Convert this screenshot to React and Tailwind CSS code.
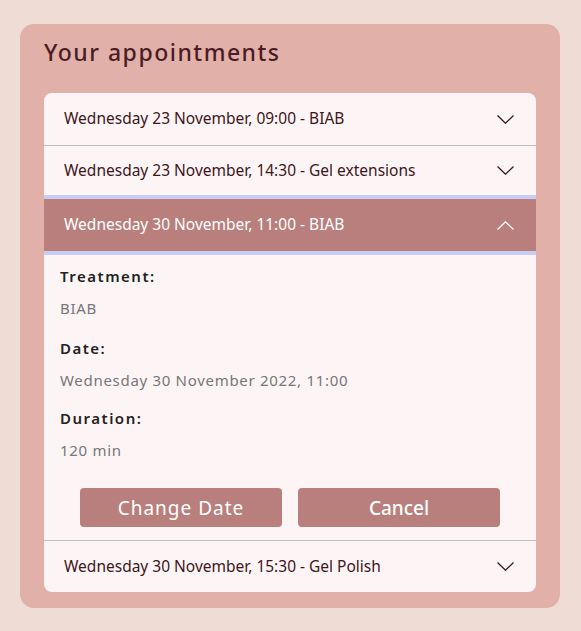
import { useState } from 'react';

const items = [
  { id: 1, title: 'Wednesday 23 November, 09:00 - BIAB' },
  { id: 2, title: 'Wednesday 23 November, 14:30 - Gel extensions' },
  {
    id: 3,
    title: 'Wednesday 30 November, 11:00 - BIAB',
    treatment: 'BIAB',
    date: 'Wednesday 30 November 2022, 11:00',
    duration: '120 min',
  },
  { id: 4, title: 'Wednesday 30 November, 15:30 - Gel Polish' },
];

function Chevron({ up }) {
  return (
    <svg width="17" height="9" viewBox="0 0 17 9" fill="none" className="shrink-0">
      <path
        d={up ? 'M0.5 8.5 L8.5 0.8 L16.5 8.5' : 'M0.5 0.5 L8.5 8.2 L16.5 0.5'}
        stroke="currentColor"
        strokeWidth="1.3"
      />
    </svg>
  );
}

export default function App() {
  const [open, setOpen] = useState(3);

  return (
    <div
      className="min-h-screen bg-[#efdcd5] pl-5 pt-6 pb-6"
      style={{ fontFamily: '"Noto Sans", "Open Sans", sans-serif' }}
    >
      <div className="w-[540px] bg-[#e1b1a9] rounded-[14px] px-6 pt-[11px] pb-4">
        <h1 className="text-[23px] leading-[34px] font-medium tracking-[1.5px] text-[#4b1b26] mb-[24px]">
          Your appointments
        </h1>

        <div className="bg-[#fdf5f5] rounded-lg overflow-hidden">
          {items.map((item, i) => {
            const isOpen = open === item.id;
            const nextOpen = open === items[i + 1]?.id;
            const last = i === items.length - 1;
            return (
              <div key={item.id}>
                {isOpen ? (
                  <div className="border-y-4 border-[#c6cef3]">
                    <button
                      type="button"
                      onClick={() => setOpen(null)}
                      className="w-full h-[52px] flex items-center justify-between pl-5 pr-[22px] bg-[#b97f7d] text-white text-[15.5px]"
                    >
                      <span>{item.title}</span>
                      <Chevron up />
                    </button>
                  </div>
                ) : (
                  <button
                    type="button"
                    onClick={() => setOpen(item.id)}
                    className={`w-full flex items-center justify-between pl-5 pr-[22px] text-[#3f1520] text-[15.5px] ${
                      last ? 'h-[51px]' : nextOpen ? 'h-[49px]' : 'h-[53px] border-b border-[#c4bdbd]'
                    }`}
                  >
                    <span>{item.title}</span>
                    <Chevron />
                  </button>
                )}

                {isOpen && (
                  <div className="px-4 pt-[10px] pb-[13px] border-b border-[#c4bdbd] text-[15px] leading-[22px]">
                    <div className="font-semibold tracking-[1.5px] text-[#222]">Treatment:</div>
                    <div className="mt-[10px] tracking-[0.7px] text-[#777]">{item.treatment}</div>
                    <div className="mt-[18px] font-semibold tracking-[1.5px] text-[#222]">Date:</div>
                    <div className="mt-[10px] tracking-[0.7px] text-[#777]">{item.date}</div>
                    <div className="mt-[16px] font-semibold tracking-[1.5px] text-[#222]">Duration:</div>
                    <div className="mt-[10px] tracking-[0.7px] text-[#777]">{item.duration}</div>
                    <div className="mt-[27px] flex gap-4 px-5">
                      <button
                        type="button"
                        className="flex-1 h-[39px] rounded bg-[#b97f7d] text-white text-[19px] tracking-[1px]"
                      >
                        Change Date
                      </button>
                      <button
                        type="button"
                        className="flex-1 h-[39px] rounded bg-[#b97f7d] text-white text-[19px] font-medium"
                      >
                        Cancel
                      </button>
                    </div>
                  </div>
                )}
              </div>
            );
          })}
        </div>
      </div>
    </div>
  );
}
